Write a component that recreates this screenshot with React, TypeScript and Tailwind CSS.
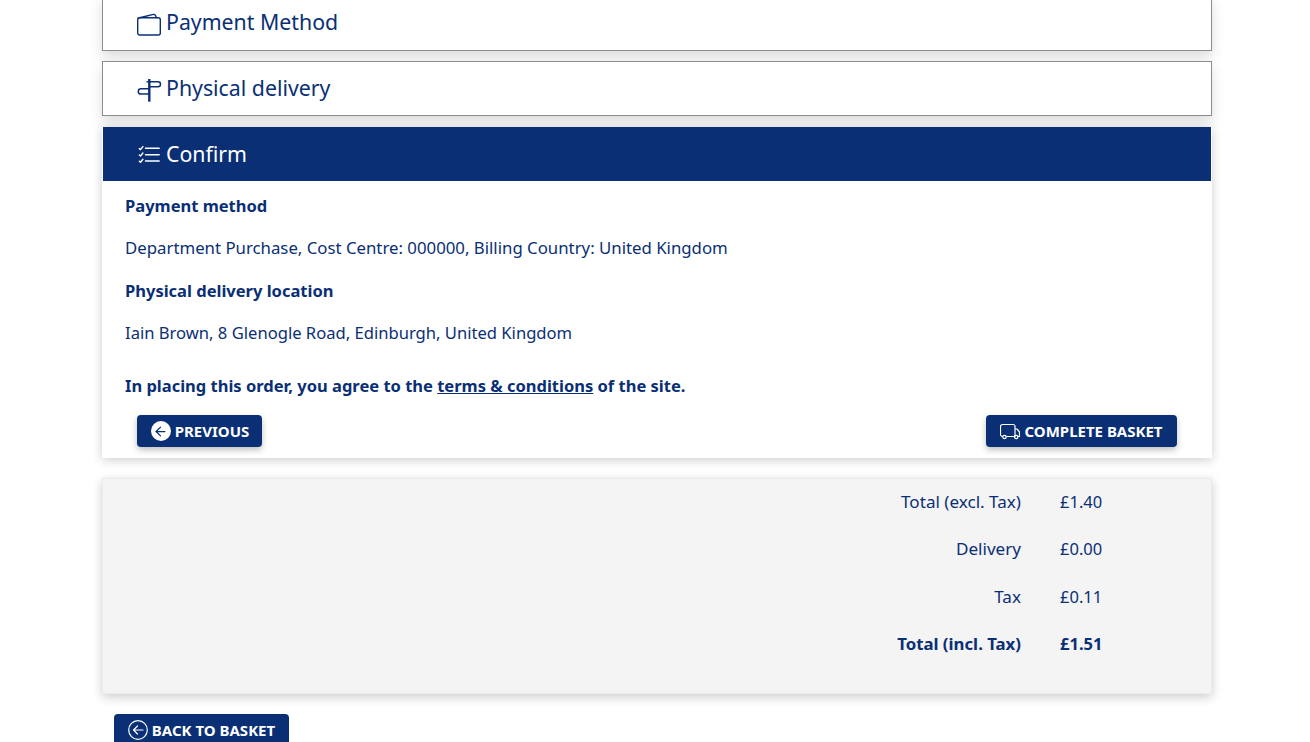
import { ArrowLeft } from 'lucide-react';
import type { ReactNode } from 'react';

function WalletIcon() {
    return (
        <svg width="24" height="24" viewBox="0 0 24 24" fill="none" stroke="currentColor" strokeWidth="1.4" strokeLinecap="round" strokeLinejoin="round" className="mt-[3px] shrink-0">
            <rect x="0.7" y="4.7" width="22.6" height="17.3" rx="2" />
            <path d="M1.5 5 L16.5 1.4 Q18.6 1 19.3 4.6" />
        </svg>
    );
}

function SignIcon() {
    return (
        <svg width="24" height="24" viewBox="0 0 24 24" fill="none" stroke="currentColor" strokeWidth="1.5" strokeLinejoin="round" className="mt-[1px] shrink-0 overflow-visible">
            <path d="M12.3 2 V24.7" strokeWidth="2.4" />
            <path d="M9.5 4.7 H21 a2.5 2.5 0 0 1 0 5 H12.3" />
            <path d="M12.3 11.7 H4 a2.7 2.7 0 0 0 0 5.4 H12.3" />
        </svg>
    );
}

function ChecklistIcon() {
    return (
        <svg width="24" height="24" viewBox="0 0 24 24" fill="none" stroke="currentColor" strokeWidth="1.4" strokeLinecap="round" strokeLinejoin="round" className="shrink-0">
            <path d="M8.5 6.3 H22.2 M8.5 12.7 H22.2 M8.5 19 H22.2" />
            <path d="M2.3 6.6 l1.2 1 l2.4 -3 M2.3 13 l1.2 1 l2.4 -3 M2.3 19.3 l1.2 1 l2.4 -3" />
        </svg>
    );
}

function TruckIcon() {
    return (
        <svg width="20" height="20" viewBox="0 0 20 20" fill="none" stroke="currentColor" strokeWidth="1.2" strokeLinejoin="round" className="shrink-0">
            <path d="M2.8 15.5 H2.5 a2 2 0 0 1 -2 -2 V5.5 a2 2 0 0 1 2 -2 H13 a2 2 0 0 1 2 2 V15.5 H6.3" />
            <path d="M15 8 H17 L19.5 11 V15.5 H18" />
            <circle cx="4.5" cy="16" r="1.7" />
            <circle cx="16.2" cy="16" r="1.7" />
        </svg>
    );
}

function BackCircleIcon() {
    return (
        <svg width="20" height="20" viewBox="0 0 20 20" fill="none" stroke="currentColor" strokeWidth="1.2" strokeLinecap="round" strokeLinejoin="round" className="shrink-0">
            <circle cx="10" cy="10" r="9.3" />
            <path d="M15 10 H5.5 M9.5 6 L5.5 10 L9.5 14" />
        </svg>
    );
}

function StepHeader({ icon, label, textClass }: { icon: ReactNode; label: string; textClass: string }) {
    return (
        <div className="bg-white border border-[#8c8c8c] h-[55px] pl-[34px] flex items-center gap-[5px] shadow-[0_6px_12px_rgba(0,0,0,0.14)] text-[#0a2f75]">
            {icon}
            <span className={`text-[21.3px] ${textClass}`}>{label}</span>
        </div>
    );
}

function TotalRow({ label, value, bold }: { label: string; value: string; bold?: boolean }) {
    return (
        <div className={`flex h-[47.4px] items-baseline leading-[46px] ${bold ? 'font-bold text-[16.8px]' : 'text-[17.1px]'}`}>
            <span className="w-[918px] text-right">{label}</span>
            <span className="ml-[39px] text-[16.5px]">{value}</span>
        </div>
    );
}

export default function App() {
    return (
        <div className="h-[742px] overflow-hidden bg-white text-[#0a2f75]" style={{ fontFamily: '"Noto Sans", sans-serif' }}>
            <div className="w-[1110px] ml-[102px] -mt-[4px] flex flex-col">
                <StepHeader icon={<WalletIcon />} label="Payment Method" textClass="mb-[3px]" />
                <div className="mt-[10px]">
                    <StepHeader icon={<SignIcon />} label="Physical delivery" textClass="mb-[1px]" />
                </div>

                <div className="mt-[11px] bg-white shadow-[0_2px_10px_rgba(0,0,0,0.2)] h-[331px] flex flex-col">
                    <div className="mx-px bg-[#0a2f75] text-white h-[54px] pl-[34px] flex items-center gap-[5px] shrink-0">
                        <ChecklistIcon />
                        <span className="text-[21.3px] mb-[1px]">Confirm</span>
                    </div>
                    <div className="px-[23px] pt-[13px] text-[16.5px] leading-[24px]">
                        <p className="font-bold">Payment method</p>
                        <p className="mt-[18px] text-[16.8px]">Department Purchase, Cost Centre: 000000, Billing Country: United Kingdom</p>
                        <p className="mt-[19px] font-bold">Physical delivery location</p>
                        <p className="mt-[18px] text-[16.6px]">Iain Brown, 8 Glenogle Road, Edinburgh, United Kingdom</p>
                        <p className="mt-[29px] font-bold">
                            In placing this order, you agree to the <span className="underline">terms &amp; conditions</span> of the site.
                        </p>
                    </div>
                    <div className="flex justify-between px-[35px] mt-[17px]">
                        <button className="bg-[#0a2f75] text-white h-[32px] w-[125px] pl-px rounded-[4px] flex items-center justify-center gap-[4px] text-[15px] font-bold shadow-[0_3px_6px_rgba(0,0,0,0.25)]">
                            <span className="w-[20px] h-[20px] rounded-full bg-white flex items-center justify-center">
                                <ArrowLeft size={15} strokeWidth={2} className="text-[#0a2f75]" />
                            </span>
                            PREVIOUS
                        </button>
                        <button className="bg-[#0a2f75] text-white h-[32px] w-[191px] rounded-[4px] flex items-center justify-center gap-[4px] text-[15px] font-bold shadow-[0_3px_6px_rgba(0,0,0,0.25)]">
                            <TruckIcon />
                            COMPLETE BASKET
                        </button>
                    </div>
                </div>

                <div className="mt-[20px] h-[216px] bg-[#f4f4f4] border border-[#ebebeb] shadow-[0_3px_10px_rgba(0,0,0,0.2)]">
                    <TotalRow label="Total (excl. Tax)" value="£1.40" />
                    <TotalRow label="Delivery" value="£0.00" />
                    <TotalRow label="Tax" value="£0.11" />
                    <TotalRow label="Total (incl. Tax)" value="£1.51" bold />
                </div>

                <button className="mt-[20px] ml-[12px] bg-[#0a2f75] text-white h-[32px] w-[175px] rounded-[4px] flex items-center justify-center gap-[4px] text-[15px] font-bold">
                    <BackCircleIcon />
                    BACK TO BASKET
                </button>
            </div>
        </div>
    );
}
